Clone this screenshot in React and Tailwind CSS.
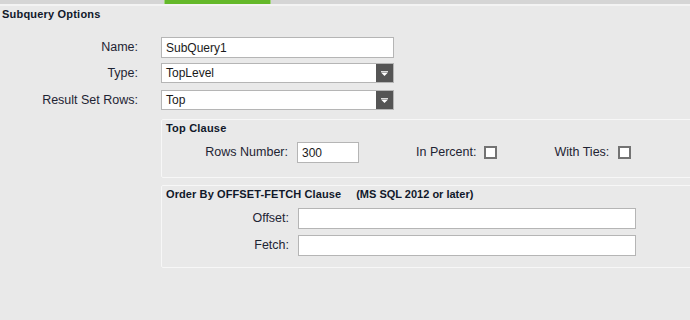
const font = { fontFamily: '"Liberation Sans", Arial, sans-serif' };

const TextBox = ({ value = '', className = '' }) => (
  <div className={`h-[21px] bg-white border border-[#b5b5b5] flex items-center pl-[4px] text-[12px] text-[#1a1a1a] ${className}`}>
    {value}
  </div>
);

const Combo = ({ value }) => (
  <div className="h-[20px] w-[233px] bg-white border border-[#b5b5b5] flex items-center text-[12px] text-[#1a1a1a]">
    <span className="flex-1 pl-[4px]">{value}</span>
    <div className="w-[17px] h-full bg-[#555555] flex items-center justify-center">
      <svg width="7" height="5" viewBox="0 0 7 5">
        <rect x="0" y="0" width="7" height="1" fill="#dcdcdc" />
        <path d="M0 1.5 L7 1.5 L3.5 5 Z" fill="#ffffff" />
      </svg>
    </div>
  </div>
);

const Check = () => (
  <div className="w-[13px] h-[13px] bg-white border-2 border-[#737373]" />
);

const Label = ({ children, className = '' }) => (
  <span className={`text-[12.5px] text-[#1e2433] ${className}`}>{children}</span>
);

export default function App() {
  return (
    <div style={font} className="w-[690px] h-[320px] bg-[#e9e9e9] overflow-hidden">
      <div className="h-[4px] bg-[#d5d5d5] flex">
        <div className="ml-[164px] w-[107px] h-full bg-[#64b82a] border-x border-[#9fd47a]" />
      </div>
      <div className="h-[2px] bg-[#f3f3f3]" />

      <div className="pl-[2px] pt-[2px] text-[11px] font-bold text-[#10182a] leading-[13px] tracking-[0.2px]">Subquery Options</div>

      <div className="mt-[16px] flex flex-col">
        <div className="flex items-center h-[21px]">
          <Label className="w-[138px] text-right">Name:</Label>
          <TextBox value="SubQuery1" className="ml-[23px] w-[233px]" />
        </div>
        <div className="flex items-center mt-[5px]">
          <Label className="w-[138px] text-right">Type:</Label>
          <div className="ml-[23px]"><Combo value="TopLevel" /></div>
        </div>
        <div className="flex items-center mt-[7px]">
          <Label className="w-[138px] text-right">Result Set Rows:</Label>
          <div className="ml-[23px]"><Combo value="Top" /></div>
        </div>
      </div>

      <div className="ml-[161px] mr-[-6px] mt-[9px] h-[59px] border border-[#f7f7f7] rounded-[2px] pl-[4px] pt-[2px]">
        <div className="text-[11px] font-bold text-[#10182a] leading-[13px] tracking-[0.2px]">Top Clause</div>
        <div className="flex items-center mt-[7px]">
          <Label className="w-[122px] text-right">Rows Number:</Label>
          <TextBox value="300" className="ml-[9px] w-[62px]" />
          <Label className="ml-[57px]">In Percent:</Label>
          <div className="ml-[8px]"><Check /></div>
          <Label className="ml-[57px]">With Ties:</Label>
          <div className="ml-[9px]"><Check /></div>
        </div>
      </div>

      <div className="ml-[161px] mr-[-6px] mt-[7px] h-[83px] border border-[#f7f7f7] rounded-[2px] pl-[4px] pt-[2px]">
        <div className="text-[11px] font-bold text-[#10182a] leading-[13px] flex">
          <span className="tracking-[0.1px]">Order By OFFSET-FETCH Clause</span>
          <span className="ml-[15px]">(MS SQL 2012 or later)</span>
        </div>
        <div className="flex items-center mt-[7px]">
          <Label className="w-[123px] text-right">Offset:</Label>
          <TextBox className="ml-[9px] w-[338px]" />
        </div>
        <div className="flex items-center mt-[6px]">
          <Label className="w-[123px] text-right">Fetch:</Label>
          <TextBox className="ml-[9px] w-[338px]" />
        </div>
      </div>
    </div>
  );
}
